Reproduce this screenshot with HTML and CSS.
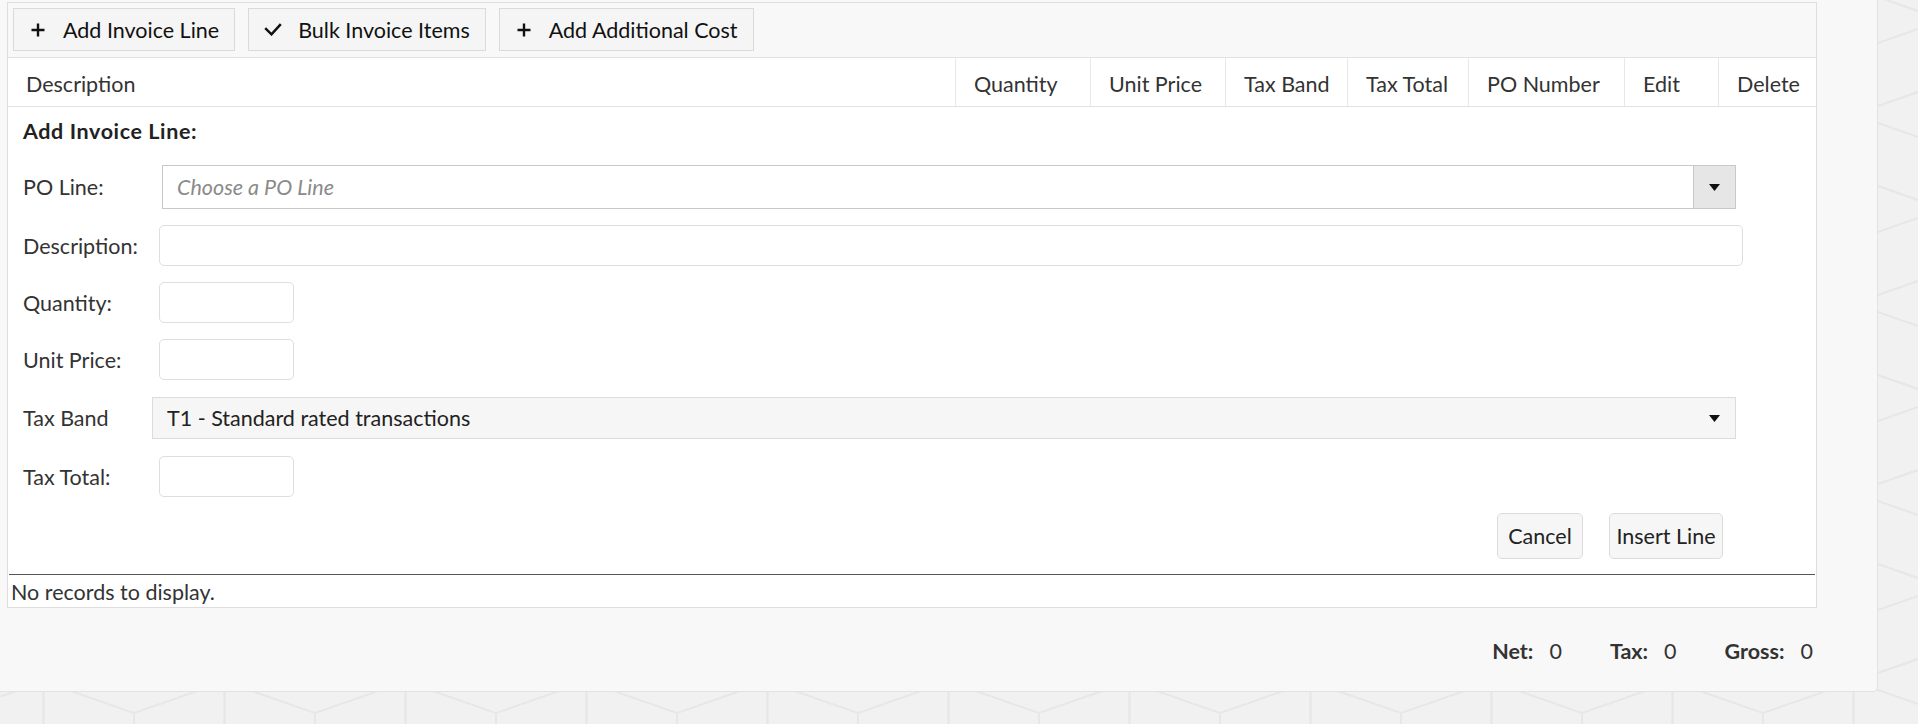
FILE: index.html
```html
<!DOCTYPE html>
<html lang="en">
<head>
    <meta charset="UTF-8">
    <meta name="viewport" content="width=device-width, initial-scale=1.0">
    <title>Invoice Lines</title>
    <link rel="stylesheet" href="styles.css">
</head>
<body>

    <div class="panel">
        <div class="grid">
            <div class="toolbar">
                <button type="button" class="tool-btn">
                    <span class="tool-icon">
                        <svg width="14" height="14" viewBox="0 0 14 14"><path d="M7 0.5v13M0.5 7h13" stroke="#111" stroke-width="2.4"/></svg>
                    </span>
                    Add Invoice Line
                </button>
                <button type="button" class="tool-btn">
                    <span class="tool-icon">
                        <svg width="18" height="13" viewBox="0 0 18 13"><path d="M1.2 5.2l6.3 6.1L16.8 1.2" fill="none" stroke="#111" stroke-width="2.5"/></svg>
                    </span>
                    Bulk Invoice Items
                </button>
                <button type="button" class="tool-btn">
                    <span class="tool-icon">
                        <svg width="14" height="14" viewBox="0 0 14 14"><path d="M7 0.5v13M0.5 7h13" stroke="#111" stroke-width="2.4"/></svg>
                    </span>
                    Add Additional Cost
                </button>
            </div>

            <div class="grid-head">
                <div>Description</div>
                <div>Quantity</div>
                <div>Unit Price</div>
                <div>Tax Band</div>
                <div>Tax Total</div>
                <div>PO Number</div>
                <div>Edit</div>
                <div>Delete</div>
            </div>

            <form class="line-form">
                <div class="form-title">Add Invoice Line:</div>

                <div class="form-row">
                    <label class="form-label label-wide">PO Line:</label>
                    <div class="po-select">
                        <span class="po-placeholder">Choose a PO Line</span>
                        <span class="po-arrow">
                            <svg width="11" height="7" viewBox="0 0 11 7"><polygon points="0,0 11,0 5.5,7" fill="#111"/></svg>
                        </span>
                    </div>
                </div>

                <div class="form-row">
                    <label class="form-label" for="descInput">Description:</label>
                    <input type="text" id="descInput" class="text-input">
                </div>

                <div class="form-row">
                    <label class="form-label" for="qtyInput">Quantity:</label>
                    <input type="text" id="qtyInput" class="text-input short">
                </div>

                <div class="form-row row-gap">
                    <label class="form-label" for="priceInput">Unit Price:</label>
                    <input type="text" id="priceInput" class="text-input short">
                </div>

                <div class="form-row row-gap">
                    <label class="form-label label-narrow">Tax Band</label>
                    <div class="tax-select">
                        <span>T1 - Standard rated transactions</span>
                        <svg width="11" height="7" viewBox="0 0 11 7"><polygon points="0,0 11,0 5.5,7" fill="#111"/></svg>
                    </div>
                </div>

                <div class="form-row">
                    <label class="form-label" for="taxInput">Tax Total:</label>
                    <input type="text" id="taxInput" class="text-input short">
                </div>

                <div class="form-actions">
                    <button type="button" class="form-btn btn-cancel">Cancel</button>
                    <button type="button" class="form-btn btn-insert">Insert Line</button>
                </div>
            </form>

            <div class="no-records">No records to display.</div>
        </div>

        <div class="totals">
            <div class="total-item"><b>Net:</b><span>0</span></div>
            <div class="total-item"><b>Tax:</b><span>0</span></div>
            <div class="total-item"><b>Gross:</b><span>0</span></div>
        </div>
    </div>

</body>
</html>
```

FILE: styles.css
```css
body {
    margin: 0;
    font-family: Lato, "Open Sans", sans-serif;
    font-size: 21.5px;
    color: #333;
    background-color: #f1f1f1;
    background-image: url("data:image/svg+xml,%3Csvg xmlns='http://www.w3.org/2000/svg' width='181' height='189'%3E%3Cg fill='none' stroke='%23e7e7e7' stroke-width='2'%3E%3Cpath d='M0 -63L90.5 -31.5V31.5L0 63L-90.5 31.5V-31.5ZM0 0V63M0 0L-90.5 -31.5M0 0L90.5 -31.5'/%3E%3Cpath transform='translate(181 0)' d='M0 -63L90.5 -31.5V31.5L0 63L-90.5 31.5V-31.5ZM0 0V63M0 0L-90.5 -31.5M0 0L90.5 -31.5'/%3E%3Cpath transform='translate(0 189)' d='M0 -63L90.5 -31.5V31.5L0 63L-90.5 31.5V-31.5ZM0 0V63M0 0L-90.5 -31.5M0 0L90.5 -31.5'/%3E%3Cpath transform='translate(181 189)' d='M0 -63L90.5 -31.5V31.5L0 63L-90.5 31.5V-31.5ZM0 0V63M0 0L-90.5 -31.5M0 0L90.5 -31.5'/%3E%3Cpath transform='translate(90.5 94.5)' d='M0 -63L90.5 -31.5V31.5L0 63L-90.5 31.5V-31.5ZM0 0V63M0 0L-90.5 -31.5M0 0L90.5 -31.5'/%3E%3C/g%3E%3C/svg%3E");
    background-position: 134px 146px;
}

button, input {
    font: inherit;
}

.panel {
    width: 1878px;
    box-sizing: border-box;
    padding: 2px 60px 25px 7px;
    background-color: #f8f8f8;
    border-right: 1px solid #e2e2e2;
    border-bottom: 1px solid #e2e2e2;
    border-bottom-right-radius: 5px;
}

.grid {
    border: 1px solid #dedede;
    background-color: #fff;
}

/* toolbar */
.toolbar {
    display: flex;
    gap: 13px;
    padding: 5px 5px 6px;
    background-color: #f8f8f8;
    border-bottom: 1px solid #e2e2e2;
}

.tool-btn {
    display: flex;
    align-items: center;
    height: 43px;
    box-sizing: border-box;
    padding: 0 15px 0 14px;
    border: 1px solid #dadada;
    background-color: #f5f5f5;
    color: #111;
    cursor: pointer;
}

.tool-icon {
    width: 20px;
    display: flex;
    justify-content: center;
    margin-right: 15px;
}

/* header */
.grid-head {
    display: grid;
    grid-template-columns: 947px 135px 135px 122px 121px 156px 94px 98px;
    border-bottom: 1px solid #e2e2e2;
}

.grid-head div {
    height: 48px;
    line-height: 48px;
    padding: 2px 0 0 18px;
    box-sizing: border-box;
    border-left: 1px solid #e8e8e8;
}

.grid-head div:first-child {
    border-left: none;
}

/* edit form */
.line-form {
    padding: 9px 0 15px 15px;
}

.form-title {
    font-weight: bold;
    letter-spacing: 0.6px;
    line-height: 30px;
    margin-bottom: 19px;
    color: #222;
}

.form-row {
    display: flex;
    align-items: center;
    margin-bottom: 16px;
}

.form-row.row-gap {
    margin-bottom: 17px;
}

.form-label {
    width: 136px;
    flex: none;
}

.label-wide {
    width: 139px;
}

.label-narrow {
    width: 129px;
}

.po-select {
    display: flex;
    width: 1574px;
    height: 44px;
    box-sizing: border-box;
    border: 1px solid #c9c9c9;
    background-color: #fff;
}

.po-placeholder {
    flex: 1;
    display: flex;
    align-items: center;
    padding-left: 14px;
    font-style: italic;
    color: #8a8a8a;
}

.po-arrow {
    width: 42px;
    display: flex;
    align-items: center;
    justify-content: center;
    box-sizing: border-box;
    background-color: #e6e6e6;
    border-left: 1px solid #c9c9c9;
}

.text-input {
    width: 1584px;
    height: 41px;
    box-sizing: border-box;
    border: 1px solid #dedede;
    border-radius: 5px;
    background-color: #fff;
}

.text-input.short {
    width: 135px;
}

.tax-select {
    display: flex;
    align-items: center;
    justify-content: space-between;
    width: 1584px;
    height: 42px;
    box-sizing: border-box;
    padding: 0 15px 0 14px;
    border: 1px solid #dcdcdc;
    background-color: #f6f6f6;
    color: #222;
}

.form-actions {
    display: flex;
    justify-content: flex-end;
    gap: 26px;
    width: 1700px;
}

.form-btn {
    height: 46px;
    padding: 0;
    border: 1px solid #dcdcdc;
    border-radius: 5px;
    background-color: #f6f6f6;
    color: #222;
    cursor: pointer;
}

.btn-cancel {
    width: 86px;
}

.btn-insert {
    width: 114px;
}

.no-records {
    margin: 0 1px;
    padding: 2px 0 0 2px;
    line-height: 30px;
    border-top: 1px solid #555;
}

/* totals */
.totals {
    display: flex;
    justify-content: flex-end;
    gap: 48px;
    margin-top: 28px;
    padding-right: 4px;
    line-height: 30px;
}

.total-item {
    display: flex;
    gap: 16px;
}
```
